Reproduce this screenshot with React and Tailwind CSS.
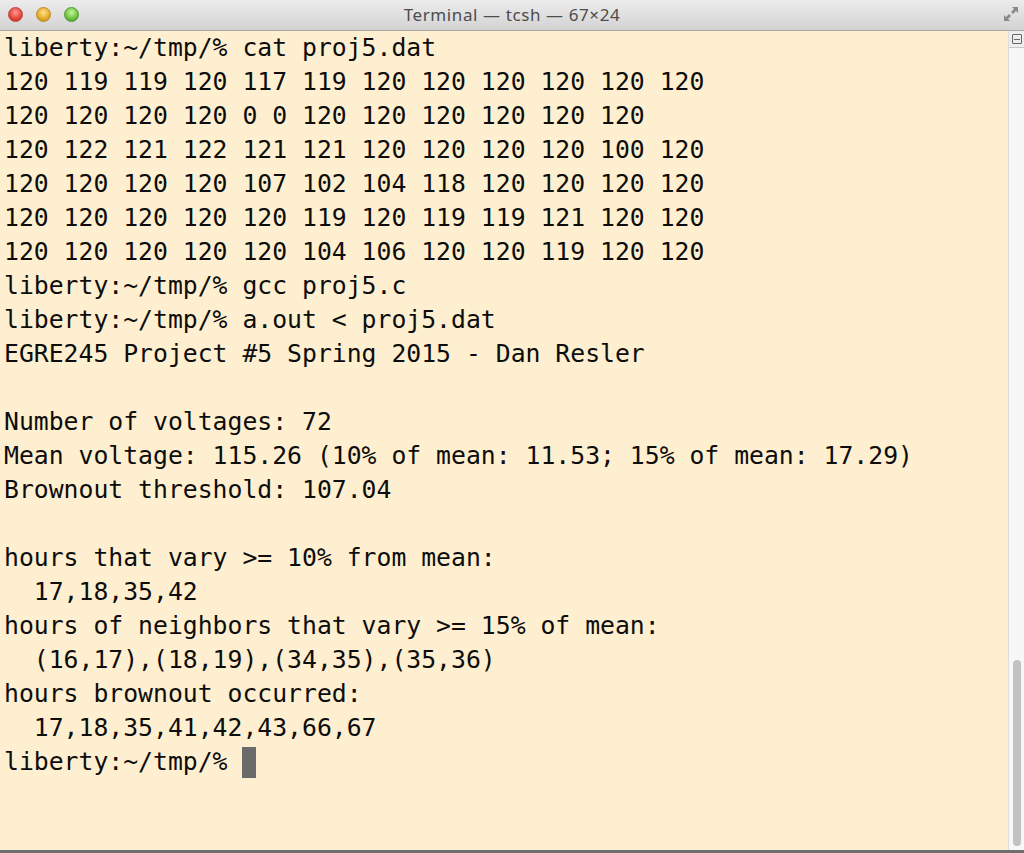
import React from "react";

const lines = [
  "liberty:~/tmp/% cat proj5.dat",
  "120 119 119 120 117 119 120 120 120 120 120 120",
  "120 120 120 120 0 0 120 120 120 120 120 120",
  "120 122 121 122 121 121 120 120 120 120 100 120",
  "120 120 120 120 107 102 104 118 120 120 120 120",
  "120 120 120 120 120 119 120 119 119 121 120 120",
  "120 120 120 120 120 104 106 120 120 119 120 120",
  "liberty:~/tmp/% gcc proj5.c",
  "liberty:~/tmp/% a.out < proj5.dat",
  "EGRE245 Project #5 Spring 2015 - Dan Resler",
  "",
  "Number of voltages: 72",
  "Mean voltage: 115.26 (10% of mean: 11.53; 15% of mean: 17.29)",
  "Brownout threshold: 107.04",
  "",
  "hours that vary >= 10% from mean:",
  "  17,18,35,42",
  "hours of neighbors that vary >= 15% of mean:",
  "  (16,17),(18,19),(34,35),(35,36)",
  "hours brownout occurred:",
  "  17,18,35,41,42,43,66,67",
];

export default function App() {
  return (
    <div className="w-[1024px] h-[853px] flex flex-col overflow-hidden bg-[#fdefcf]">
      <div className="h-[31px] shrink-0 relative flex items-center justify-center bg-gradient-to-b from-[#ececec] to-[#d3d3d3] border-b border-[#a8a8a8]">
        <div className="absolute left-[8px] top-[7px] flex gap-[13px]">
          <div className="w-[15px] h-[15px] rounded-full bg-[radial-gradient(circle_at_50%_35%,#ff9a8f,#e0443a_60%,#a8271f)] border border-[#b8463d]" />
          <div className="w-[15px] h-[15px] rounded-full bg-[radial-gradient(circle_at_50%_35%,#ffe28a,#e3a826_60%,#b07d13)] border border-[#b98a2a]" />
          <div className="w-[15px] h-[15px] rounded-full bg-[radial-gradient(circle_at_50%_35%,#c6f59a,#6cc040_60%,#3f8a21)] border border-[#4e9a33]" />
        </div>
        <span className="text-[17px] text-[#4d4d4d] tracking-[0.6px]" style={{ fontFamily: "'Noto Sans', 'Liberation Sans', sans-serif" }}>
          Terminal — tcsh — 67×24
        </span>
        <svg className="absolute right-[4px] top-[5px]" width="18" height="18" viewBox="0 0 18 18">
          <path d="M10 2 L16 2 L16 8 L14 6 L11 9 L9 7 L12 4 Z" fill="#8a8a8a" />
          <path d="M8 16 L2 16 L2 10 L4 12 L7 9 L9 11 L6 14 Z" fill="#8a8a8a" />
        </svg>
      </div>
      <div className="flex-1 flex min-h-0">
        <div
          className="flex-1 pl-[4px] text-[24.75px] leading-[34px] text-[#0d0d0d] whitespace-pre"
          style={{ fontFamily: "'DejaVu Sans Mono', 'Liberation Mono', monospace" }}
        >
          {lines.map((l, i) => (
            <div key={i} className="h-[34px]">{l}</div>
          ))}
          <div className="h-[34px] flex items-center">
            <span>liberty:~/tmp/% </span>
            <span className="inline-block w-[14px] h-[31px] bg-[#6b6b6b]" />
          </div>
        </div>
        <div className="w-[16px] shrink-0 flex flex-col bg-[#f7f7f7] border-l border-[#dcdcdc]">
          <div className="h-[17px] flex items-center justify-center border-b border-[#c8c8c8] bg-[#ededed]">
            <div className="w-[10px] h-[10px] border border-[#666] rounded-[1px] flex flex-col justify-center gap-[2px] px-[1px]">
              <div className="h-[1px] bg-[#666]" />
            </div>
          </div>
          <div className="flex-1 flex flex-col justify-end pb-[4px] pl-[4px] pr-[3px]">
            <div className="h-[186px] w-full rounded-full bg-[#c2c2c2]" />
          </div>
        </div>
      </div>
      <div className="h-[3px] shrink-0 bg-[#6e6e6e]" />
    </div>
  );
}
